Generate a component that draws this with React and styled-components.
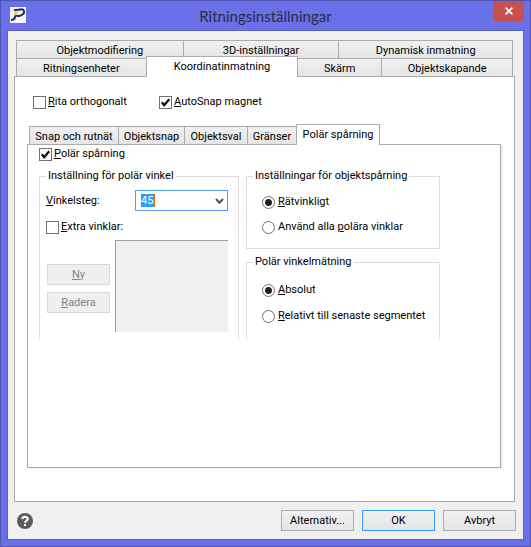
import React, { useState } from 'react'
import styled, { createGlobalStyle, css } from 'styled-components'

const GlobalStyle = createGlobalStyle`
    * {
        box-sizing: border-box;
    }
    body {
        margin: 0;
        font-family: Roboto, sans-serif;
        font-size: 11px;
        line-height: 14px;
        color: #000;
    }
    button, select, input {
        font: inherit;
        color: inherit;
        margin: 0;
    }
`

const Logo = () => (
    <svg width="16" height="16" viewBox="0 0 16 16" aria-hidden="true">
        <rect width="16" height="16" fill="#f4f4f8" />
        <path
            d="M4 3.2 L10.5 2.4 C14.6 2 14.8 5 13.2 6.8 C11.8 8.4 9.4 9 6.6 9"
            fill="none"
            stroke="#1c2a66"
            strokeWidth="2"
        />
        <path d="M6.2 7.6 L4 12.2 L1 13.2" fill="none" stroke="#1c2a66" strokeWidth="2.2" />
        <path d="M5.6 4.6 L7.8 4.4 L5.8 8.2 L3.4 8.4 Z" fill="#f5bd1f" />
    </svg>
)

const CloseIcon = () => (
    <svg width="8" height="8" viewBox="0 0 8 8" aria-hidden="true">
        <path d="M0.6 0.6 L7.4 7.4 M7.4 0.6 L0.6 7.4" stroke="#fff" strokeWidth="1.7" />
    </svg>
)

const HelpIcon = () => (
    <svg width="16" height="16" viewBox="0 0 16 16" aria-hidden="true">
        <circle cx="8" cy="8" r="8" fill="#5c5c5c" />
        <path
            d="M5.4 6 C5.4 3 10.7 3.1 10.7 5.9 C10.7 7.8 8 7.8 8 9.8"
            fill="none"
            stroke="#fff"
            strokeWidth="2.2"
        />
        <rect x="7" y="11" width="2" height="2" fill="#fff" />
    </svg>
)

const TickIcon = () => (
    <svg width="13" height="13" viewBox="0 0 13 13" aria-hidden="true">
        <path d="M2.8 6.2 L5.2 9.2 L10.2 3.2" fill="none" stroke="#111" strokeWidth="2.2" />
    </svg>
)

const CheckBox = ({ children, defaultChecked = false }) => {
    const [checked, setChecked] = useState(defaultChecked)
    return (
        <S.Choice>
            <S.CheckWrap>
                <S.Check
                    type="checkbox"
                    checked={checked}
                    onChange={(e) => setChecked(e.target.checked)}
                />
                {checked && <TickIcon />}
            </S.CheckWrap>
            <span>{children}</span>
        </S.Choice>
    )
}

const RadioButton = ({ children, ...rest }) => (
    <S.Choice $gap={3}>
        <S.Radio type="radio" {...rest} />
        <span>{children}</span>
    </S.Choice>
)

const App = () => {
    return (
        <>
            <GlobalStyle />
            <S.Window>
                <S.TitleBar>
                    <Logo />
                    <S.Title>Ritningsinställningar</S.Title>
                    <S.CloseButton aria-label="Stäng">
                        <CloseIcon />
                    </S.CloseButton>
                </S.TitleBar>
                <S.Content>
                    <S.TabRow>
                        <S.Tab $grow={167}>Objektmodifiering</S.Tab>
                        <S.Tab $grow={156}>3D-inställningar</S.Tab>
                        <S.Tab $grow={174}>Dynamisk inmatning</S.Tab>
                    </S.TabRow>
                    <S.TabRow>
                        <S.Tab $grow={130}>Ritningsenheter</S.Tab>
                        <S.Tab $grow={152} $active>
                            Koordinatinmatning
                        </S.Tab>
                        <S.Tab $grow={84}>Skärm</S.Tab>
                        <S.Tab $grow={131}>Objektskapande</S.Tab>
                    </S.TabRow>
                    <S.Page>
                        <S.TopChecks>
                            <CheckBox>
                                <u>R</u>ita orthogonalt
                            </CheckBox>
                            <CheckBox defaultChecked>
                                <u>A</u>utoSnap magnet
                            </CheckBox>
                        </S.TopChecks>
                        <S.InnerTabs>
                            <S.Tab $width={90}>Snap och rutnät</S.Tab>
                            <S.Tab $width={67}>Objektsnap</S.Tab>
                            <S.Tab $width={64}>Objektsval</S.Tab>
                            <S.Tab $width={50}>Gränser</S.Tab>
                            <S.Tab $width={84} $active>
                                Polär spårning
                            </S.Tab>
                        </S.InnerTabs>
                        <S.InnerPage>
                            <CheckBox defaultChecked>
                                <u>P</u>olär spårning
                            </CheckBox>
                            <S.Groups>
                                <S.Group $open>
                                    <S.Legend>Inställning för polär vinkel</S.Legend>
                                    <S.AngleRow>
                                        <label htmlFor="angle">
                                            <u>V</u>inkelsteg:
                                        </label>
                                        <S.SelectWrap>
                                            <S.Select id="angle" defaultValue="45">
                                                <option>90</option>
                                                <option>45</option>
                                                <option>30</option>
                                                <option>15</option>
                                            </S.Select>
                                            <svg width="9" height="7" viewBox="0 0 9 7" aria-hidden="true">
                                                <path
                                                    d="M1 1 L4.5 4.8 L8 1"
                                                    fill="none"
                                                    stroke="#555"
                                                    strokeWidth="2"
                                                />
                                            </svg>
                                        </S.SelectWrap>
                                    </S.AngleRow>
                                    <S.ExtraRow>
                                        <CheckBox>
                                            <u>E</u>xtra vinklar:
                                        </CheckBox>
                                    </S.ExtraRow>
                                    <S.ListRow>
                                        <S.ListButtons>
                                            <S.Button disabled>
                                                <u>N</u>y
                                            </S.Button>
                                            <S.Button disabled>
                                                <u>R</u>adera
                                            </S.Button>
                                        </S.ListButtons>
                                        <S.AngleList />
                                    </S.ListRow>
                                </S.Group>
                                <S.Column>
                                    <S.Group>
                                        <S.Legend>Inställningar för objektspårning</S.Legend>
                                        <S.Radios $top={12} $gap={11}>
                                            <RadioButton name="tracking" defaultChecked>
                                                <u>R</u>ätvinkligt
                                            </RadioButton>
                                            <RadioButton name="tracking">
                                                Använd alla <u>p</u>olära vinklar
                                            </RadioButton>
                                        </S.Radios>
                                    </S.Group>
                                    <S.Group $open>
                                        <S.Legend>Polär vinkelmätning</S.Legend>
                                        <S.Radios $top={14} $gap={12}>
                                            <RadioButton name="measure" defaultChecked>
                                                <u>A</u>bsolut
                                            </RadioButton>
                                            <RadioButton name="measure">
                                                <u>R</u>elativt till senaste segmentet
                                            </RadioButton>
                                        </S.Radios>
                                    </S.Group>
                                </S.Column>
                            </S.Groups>
                        </S.InnerPage>
                    </S.Page>
                    <S.Footer>
                        <S.HelpButton aria-label="Hjälp">
                            <HelpIcon />
                        </S.HelpButton>
                        <S.Button>Alternativ...</S.Button>
                        <S.Button $primary>OK</S.Button>
                        <S.Button>Avbryt</S.Button>
                    </S.Footer>
                </S.Content>
            </S.Window>
        </>
    )
}

const S = {
    Window: styled.div`
        display: flex;
        flex-direction: column;
        min-height: 100vh;
        padding: 0 6px 6px;
        border: 1px solid #4f54b3;
        background-color: #6970e8;
    `,
    TitleBar: styled.header`
        display: flex;
        align-items: flex-start;
        height: 29px;
        & > svg {
            margin: 6px 0 0 3px;
        }
    `,
    Title: styled.h1`
        flex-grow: 1;
        margin: 3px 0 0;
        padding-left: 12px;
        font-family: Lato, 'Open Sans', sans-serif;
        font-size: 15px;
        font-weight: 400;
        line-height: 24px;
        text-align: center;
        color: #2b2b45;
    `,
    CloseButton: styled.button`
        display: flex;
        justify-content: center;
        align-items: center;
        width: 31px;
        height: 20px;
        padding: 0;
        border: none;
        background-color: #c75050;
    `,
    Content: styled.main`
        display: flex;
        flex-direction: column;
        flex-grow: 1;
        padding: 9px 7px 8px 6px;
        border: 1px solid #5b60c6;
        background-color: #f0f0f0;
    `,
    TabRow: styled.div`
        display: flex;
        align-items: flex-end;
        height: 18px;
        padding: 0 3px 0 2px;
    `,
    Tab: styled.button`
        ${({ $width, $grow }) =>
            $width
                ? css`
                      flex: 0 0 ${$width}px;
                  `
                : css`
                      flex: ${$grow} 1 0;
                  `}
        height: 19px;
        margin: 0 0 -1px;
        padding: 2px 0 0;
        border: 1px solid #acacac;
        background: linear-gradient(#f0f0f0, #e5e5e5);
        line-height: 15px;
        text-align: center;
        white-space: nowrap;
        & + & {
            margin-left: -1px;
        }
        ${({ $active }) =>
            $active &&
            css`
                z-index: 1;
                height: 21px;
                padding: 0 0 2px;
                border-bottom: none;
                background: #fff;
            `}
    `,
    Page: styled.section`
        display: flex;
        flex-direction: column;
        flex-grow: 1;
        margin-right: 1px;
        padding: 18px 13px 33px 12px;
        border: 1px solid #acacac;
        background-color: #fff;
    `,
    TopChecks: styled.div`
        display: grid;
        grid-template-columns: 126px 1fr;
        padding: 0 6px 17px;
    `,
    InnerTabs: styled.div`
        display: flex;
        align-items: flex-end;
        height: 18px;
        padding: 0 2px;
    `,
    InnerPage: styled.section`
        flex-grow: 1;
        padding: 2px 60px 0 11px;
        border: 1px solid #acacac;
        box-shadow: 2px 1px 0 #f0f0f0;
    `,
    Groups: styled.div`
        display: grid;
        grid-template-columns: minmax(0, 200fr) minmax(0, 194fr);
        align-items: stretch;
        gap: 7px;
        margin-top: 8px;
    `,
    Column: styled.div`
        display: flex;
        flex-direction: column;
        gap: 6px;
    `,
    Group: styled.fieldset`
        min-width: 0;
        margin: 0;
        padding: 0 10px 7px 6px;
        border: 1px solid #dcdcdc;
        ${({ $open }) =>
            $open &&
            css`
                flex-grow: 1;
                border-bottom: none;
            `}
    `,
    Legend: styled.legend`
        padding: 0 2px;
        white-space: nowrap;
    `,
    AngleRow: styled.div`
        display: flex;
        justify-content: space-between;
        align-items: center;
        margin-top: 7px;
    `,
    SelectWrap: styled.div`
        position: relative;
        width: 93px;
        & svg {
            position: absolute;
            top: 8px;
            right: 4px;
            pointer-events: none;
        }
    `,
    Select: styled.select`
        display: block;
        width: 100%;
        height: 21px;
        padding: 0 0 0 5px;
        border: 1px solid #569de5;
        border-radius: 0;
        appearance: none;
        /* selected value with the caret right after it */
        background:
            linear-gradient(#c8742c, #c8742c) 18px 3px / 1px 13px no-repeat,
            linear-gradient(#3399ff, #3399ff) 5px 3px / 13px 13px no-repeat,
            #fff;
        color: #fff;
        outline: none;
        & option {
            color: #000;
        }
    `,
    ExtraRow: styled.div`
        margin-top: 9px;
    `,
    ListRow: styled.div`
        display: flex;
        justify-content: space-between;
        gap: 4px;
        margin: 6px 0 0 1px;
    `,
    ListButtons: styled.div`
        display: flex;
        flex-direction: column;
        gap: 7px;
        flex: 0 0 63px;
        padding-top: 24px;
    `,
    AngleList: styled.div`
        flex: 0 1 113px;
        height: 92px;
        border: 1px solid #a0a0a0;
        border-width: 1px 0 0 1px;
        background-color: #f0f0f0;
    `,
    Radios: styled.div`
        display: flex;
        flex-direction: column;
        gap: ${({ $gap }) => $gap}px;
        padding: ${({ $top }) => $top}px 0 7px 9px;
    `,
    Choice: styled.label`
        display: flex;
        align-items: center;
        gap: ${({ $gap = 2 }) => $gap}px;
        width: fit-content;
        white-space: nowrap;
    `,
    CheckWrap: styled.span`
        display: grid;
        & > * {
            grid-area: 1 / 1;
        }
        & svg {
            pointer-events: none;
        }
    `,
    Check: styled.input`
        width: 13px;
        height: 13px;
        border: 1px solid #707070;
        appearance: none;
        background-color: #fff;
    `,
    Radio: styled.input`
        width: 13px;
        height: 13px;
        border: 1px solid #707070;
        border-radius: 50%;
        appearance: none;
        background-color: #fff;
        &:checked {
            background-image: radial-gradient(circle, #1f1f1f 3px, transparent 4px);
        }
    `,
    Footer: styled.footer`
        display: flex;
        align-items: center;
        gap: 8px;
        padding-top: 8px;
        & > button:not(:first-child) {
            flex: 0 0 73px;
        }
    `,
    HelpButton: styled.button`
        display: flex;
        margin-right: auto;
        padding: 0 0 0 3px;
        border: none;
        background: none;
    `,
    Button: styled.button`
        height: 21px;
        padding: 1px 0 0;
        border: 1px solid #acacac;
        background: linear-gradient(#f0f0f0, #e5e5e5);
        text-align: center;
        &:disabled {
            border-color: #d9d9d9;
            background: #efefef;
            color: #838383;
        }
        ${({ $primary }) =>
            $primary &&
            css`
                border-color: #3399ff;
            `}
    `,
}

export default App
